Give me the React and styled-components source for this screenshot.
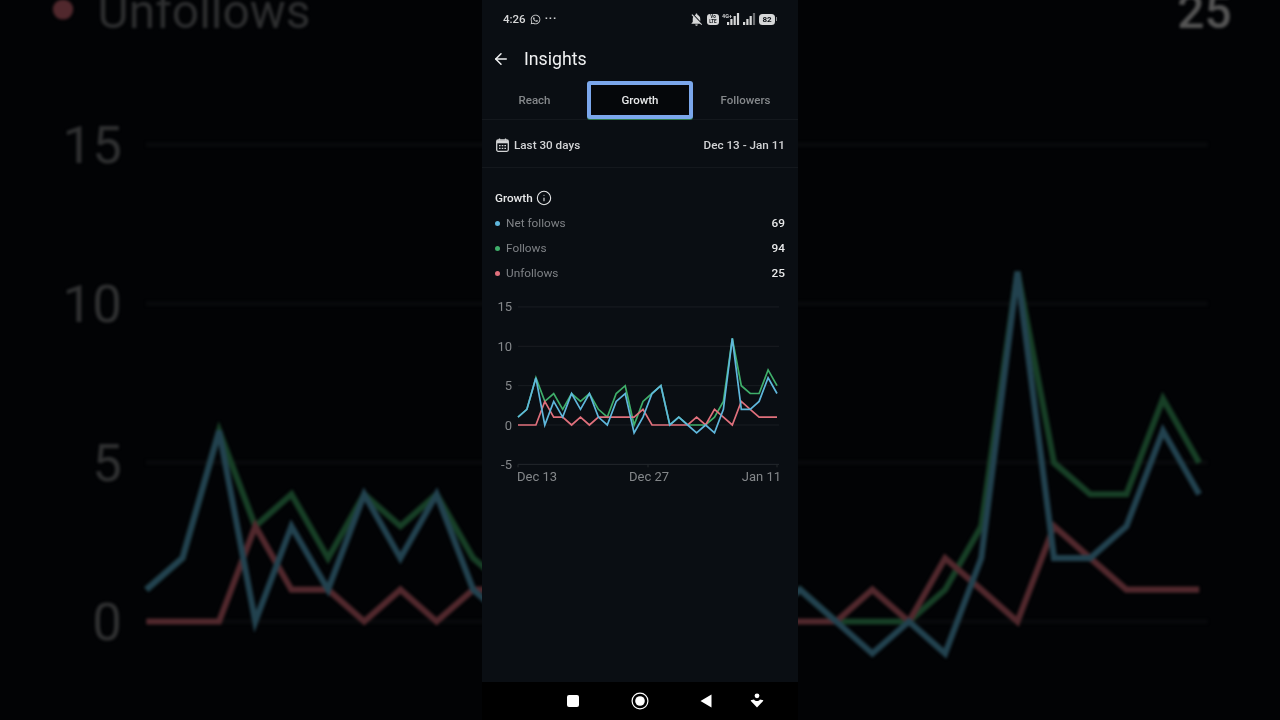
import React from "react";
import styled, { createGlobalStyle } from "styled-components";
import { ArrowLeft, Info } from "lucide-react";
import { FaWhatsapp } from "react-icons/fa";
import { MdNotificationsOff } from "react-icons/md";

const FOLLOWS = [1, 2, 6, 3, 4, 2, 4, 3, 4, 2, 1, 4, 5, 0, 3, 4, 5, 0, 1, 0, 0, 0, 1, 3, 11, 5, 4, 4, 7, 5];
const UNFOLLOWS = [0, 0, 0, 3, 1, 1, 0, 1, 0, 1, 1, 1, 1, 1, 2, 0, 0, 0, 0, 0, 1, 0, 2, 1, 0, 3, 2, 1, 1, 1];
const NET = FOLLOWS.map((v, i) => v - UNFOLLOWS[i]);

const BLUE = "#5fb7dc";
const GREEN = "#3fae6a";
const RED = "#e0707c";

const GlobalStyle = createGlobalStyle`
  html, body {
    margin: 0;
    height: 100%;
    background: #020305;
    overflow: hidden;
    font-family: Roboto, "Liberation Sans", sans-serif;
  }
`;

const Page = styled.div`
  position: relative;
  width: 1280px;
  height: 720px;
  display: flex;
  justify-content: center;
  overflow: hidden;
  background: #020305;
`;

/* the blown up copy of the video behind the phone */
const Backdrop = styled.div`
  position: absolute;
  left: 0;
  top: -41px;
  width: 316px;
  transform: scale(4.065, 4.04);
  transform-origin: top left;
  filter: brightness(0.36) blur(0.35px);
`;

const Screen = styled.div`
  position: relative;
  width: 316px;
  height: 720px;
  display: flex;
  flex-direction: column;
  background: #0a0e13;
  filter: blur(0.3px);
`;

const StatusBar = styled.div`
  height: 38px;
  padding: 0 21px;
  display: flex;
  align-items: center;
  justify-content: space-between;
  color: #d6d7d8;
`;

const StatusGroup = styled.div`
  display: flex;
  align-items: center;
  gap: ${(props) => props.$gap || 4}px;
`;

const Clock = styled.span`
  font-size: 11.5px;
  font-weight: 500;
`;

const Dots = styled.span`
  font-size: 11px;
  font-weight: 700;
  letter-spacing: 0.8px;
  line-height: 12px;
`;

const Volte = styled.span`
  width: 12px;
  height: 11px;
  border-radius: 3px;
  background: #d6d7d8;
  color: #0a0e13;
  font-size: 4.5px;
  line-height: 5px;
  font-weight: 700;
  text-align: center;
  display: flex;
  flex-direction: column;
  justify-content: center;
`;

const Battery = styled.span`
  position: relative;
  width: 16px;
  height: 11px;
  border-radius: 3.5px;
  background: #d6d7d8;
  color: #0a0e13;
  font-size: 8px;
  font-weight: 700;
  line-height: 11px;
  text-align: center;
  margin-right: 2px;

  &::after {
    content: "";
    position: absolute;
    right: -2px;
    top: 3.5px;
    width: 1.5px;
    height: 4px;
    background: #85878a;
  }
`;

const Header = styled.div`
  height: 43px;
  padding: 0 0 1px 10px;
  box-sizing: border-box;
  display: flex;
  align-items: center;
  gap: 14px;
  color: #f0f1f2;
`;

const Title = styled.h1`
  margin: 1px 0 0;
  font-size: 17.7px;
  font-weight: 400;
  line-height: 1;
`;

const Tabs = styled.div`
  height: 38px;
  display: grid;
  grid-template-columns: 105px 106px 105px;
  border-bottom: 1px solid #14181d;
`;

const Tab = styled.div`
  display: flex;
  align-items: center;
  justify-content: center;
  box-sizing: border-box;
  height: 38px;
  font-size: 11.5px;
  font-weight: 500;
  color: ${(props) => (props.$active ? "#e8e9ea" : "#85888b")};
  ${(props) =>
    props.$active &&
    `
    border: 4px solid #7ba7ec;
    border-radius: 3px;
    background: #05070a;
    box-shadow: 0 1px 0 #2f7a4f;
  `}
`;

const DateRow = styled.div`
  height: 48px;
  padding: 2px 13px 0 14px;
  box-sizing: border-box;
  display: flex;
  align-items: center;
  justify-content: space-between;
  border-bottom: 1px solid #14181d;
  font-size: 11.7px;
  font-weight: 500;
  color: #d2d3d5;
`;

const DateLabel = styled.div`
  display: flex;
  align-items: center;
  gap: 5px;
`;

const Section = styled.section`
  padding: ${(props) => (props.$flush ? 0 : 18)}px 13px 0;
`;

const SectionTitle = styled.div`
  height: 24.5px;
  display: flex;
  align-items: center;
  gap: 3px;
  font-size: 11.7px;
  font-weight: 500;
  color: #e8e9ea;
`;

const Row = styled.div`
  height: 25px;
  display: flex;
  align-items: center;
  font-size: 11.8px;
`;

const Dot = styled.span`
  width: 5px;
  height: 5px;
  border-radius: 50%;
  margin-right: 6px;
  background: ${(props) => props.$color};
`;

const RowLabel = styled.span`
  flex: 1;
  color: #7f8286;
`;

const RowValue = styled.span`
  font-weight: 500;
  color: #e8e9ea;
`;

const ChartBox = styled.svg`
  display: block;
  width: 316px;
  height: 192px;
  margin-top: ${(props) => props.$top}px;
  overflow: visible;
`;

const AxisText = styled.text`
  font-family: Roboto, "Liberation Sans", sans-serif;
  font-size: 13px;
  fill: #84878a;
`;

const Spacer = styled.div`
  flex: 1;
`;

const NavBar = styled.nav`
  height: 38px;
  padding-left: 60px;
  display: flex;
  align-items: center;
  background: #000;
`;

const NavSlot = styled.div`
  width: ${(props) => props.$width}px;
  display: flex;
  justify-content: center;
`;

const StopButton = styled.span`
  width: 12px;
  height: 12px;
  border-radius: 2px;
  background: #fff;
`;

// phone px to chart px
const px = (i) => 36 + (i * 259) / 29;
const py = (v) => 129 - v * 7.87;

const toPoints = (values) => values.map((v, i) => `${px(i).toFixed(1)},${py(v).toFixed(1)}`).join(" ");

// the backdrop is cropped by the window, so it only gets the ticks in view
const Chart = ({ ticks, withAxis, top, stroke }) => (
  <ChartBox viewBox="0 0 316 192" $top={top}>
    {[15, 10, 5, 0, -5].map((v) => (
      <line key={v} x1="36" x2="297" y1={py(v)} y2={py(v)} stroke={v === -5 ? "#24282d" : "#191d22"} strokeWidth="1" />
    ))}
    {ticks.map((v) => (
      <AxisText key={v} x="30" y={py(v) + 4.5} textAnchor="end">
        {v}
      </AxisText>
    ))}
    {withAxis && (
      <g>
        {[36, 166, 295].map((x) => (
          <line key={x} x1={x} x2={x} y1={py(-5)} y2={py(-5) + 3} stroke="#24282d" />
        ))}
        <AxisText x="35" y="184.5">Dec 13</AxisText>
        <AxisText x="147" y="184.5">Dec 27</AxisText>
        <AxisText x="299" y="184.5" textAnchor="end">Jan 11</AxisText>
      </g>
    )}
    <polyline points={toPoints(FOLLOWS)} fill="none" stroke={GREEN} strokeWidth={stroke} />
    <polyline points={toPoints(UNFOLLOWS)} fill="none" stroke={RED} strokeWidth={stroke} />
    <polyline points={toPoints(NET)} fill="none" stroke={BLUE} strokeWidth={stroke} />
  </ChartBox>
);

const Signal = ({ tag, bars }) => (
  <svg width={tag ? 18 : 13} height="13" viewBox={tag ? "0 0 18 13" : "0 0 13 13"}>
    {tag && (
      <text x="0" y="5" fontSize="5.5" fontWeight="700" fill="#d6d7d8" fontFamily="Roboto, sans-serif">
        {tag}
      </text>
    )}
    {[0, 1, 2, 3].map((n) => {
      const left = (tag ? 5 : 0) + n * 3.3;
      const h = 3 + n * 3;
      return <rect key={n} x={left} y={12 - h} width="2.2" height={h} fill={n < bars ? "#d6d7d8" : "#6a6c6f"} />;
    })}
  </svg>
);

const CalendarIcon = () => (
  <svg width="13" height="14" viewBox="0 0 13 14" fill="none">
    <rect x=".7" y="2" width="11.6" height="11.3" rx="1.5" stroke="#d2d3d5" strokeWidth="1.3" />
    <path d="M1 2.5h11v2.8H1z" fill="#d2d3d5" />
    <path d="M3.500 .5v2M9.500 .5v2" stroke="#d2d3d5" strokeWidth="1.3" />
    <path d="M3 7h1.600v1.300H3zM5.700 7h1.600v1.300H5.700zM8.400 7H10v1.300H8.400zM3 9.800h1.600v1.300H3zM5.700 9.800h1.600v1.300H5.700zM8.400 9.800H10v1.300H8.400z" fill="#d2d3d5" />
  </svg>
);

const NavTriangle = () => (
  <svg width="12" height="14" viewBox="0 0 12 14">
    <path d="M11.500 .5v13L.5 7z" fill="#fff" />
  </svg>
);

const NavRing = () => (
  <svg width="18" height="18" viewBox="0 0 18 18">
    <circle cx="9" cy="9" r="7.9" fill="none" stroke="#fff" strokeWidth="1.2" />
    <circle cx="9" cy="9" r="4.8" fill="#fff" />
  </svg>
);

const NavAssist = () => (
  <svg width="14" height="16" viewBox="0 0 14 16">
    <circle cx="7" cy="2.8" r="2.4" fill="#fff" />
    <path d="M.6 7.200 4 6.400c.8 1 1.800 1.500 3 1.500s2.200-.5 3-1.500l3.400.8c-.4 1-1.200 2-2.200 2.800L7 14.500 2.800 10C1.800 9.200 1 8.200.6 7.200z" fill="#fff" />
  </svg>
);

const UnfollowsRow = () => (
  <Row>
    <Dot $color={RED} />
    <RowLabel>Unfollows</RowLabel>
    <RowValue>25</RowValue>
  </Row>
);

const App = () => {
  return (
    <Page>
      <GlobalStyle />
      <Backdrop>
        <Section $flush>
          <UnfollowsRow />
        </Section>
        <Chart ticks={[15, 10, 5, 0]} top={10} stroke={1.5} />
      </Backdrop>
      <Screen>
        <StatusBar>
          <StatusGroup>
            <Clock>4:26</Clock>
            <FaWhatsapp size={11} />
            <Dots>···</Dots>
          </StatusGroup>
          <StatusGroup $gap={3}>
            <MdNotificationsOff size={15} />
            <Volte>
              <span>Vo</span>
              <span>LTE</span>
            </Volte>
            <Signal tag="4G+" bars={4} />
            <Signal bars={3} />
            <Battery>82</Battery>
          </StatusGroup>
        </StatusBar>
        <Header>
          <ArrowLeft size={18} strokeWidth={2} />
          <Title>Insights</Title>
        </Header>
        <Tabs>
          <Tab>Reach</Tab>
          <Tab $active>Growth</Tab>
          <Tab>Followers</Tab>
        </Tabs>
        <DateRow>
          <DateLabel>
            <CalendarIcon />
            Last 30 days
          </DateLabel>
          <span>Dec 13 - Jan 11</span>
        </DateRow>
        <Section>
          <SectionTitle>
            Growth
            <Info size={16} strokeWidth={1.6} />
          </SectionTitle>
          <Row>
            <Dot $color={BLUE} />
            <RowLabel>Net follows</RowLabel>
            <RowValue>69</RowValue>
          </Row>
          <Row>
            <Dot $color={GREEN} />
            <RowLabel>Follows</RowLabel>
            <RowValue>94</RowValue>
          </Row>
          <UnfollowsRow />
        </Section>
        <Chart ticks={[15, 10, 5, 0, -5]} withAxis top={10.5} stroke={1.7} />
        <Spacer />
        <NavBar>
          <NavSlot $width={62}>
            <StopButton />
          </NavSlot>
          <NavSlot $width={72}>
            <NavRing />
          </NavSlot>
          <NavSlot $width={60}>
            <NavTriangle />
          </NavSlot>
          <NavSlot $width={42}>
            <NavAssist />
          </NavSlot>
        </NavBar>
      </Screen>
    </Page>
  );
};

export default App;
